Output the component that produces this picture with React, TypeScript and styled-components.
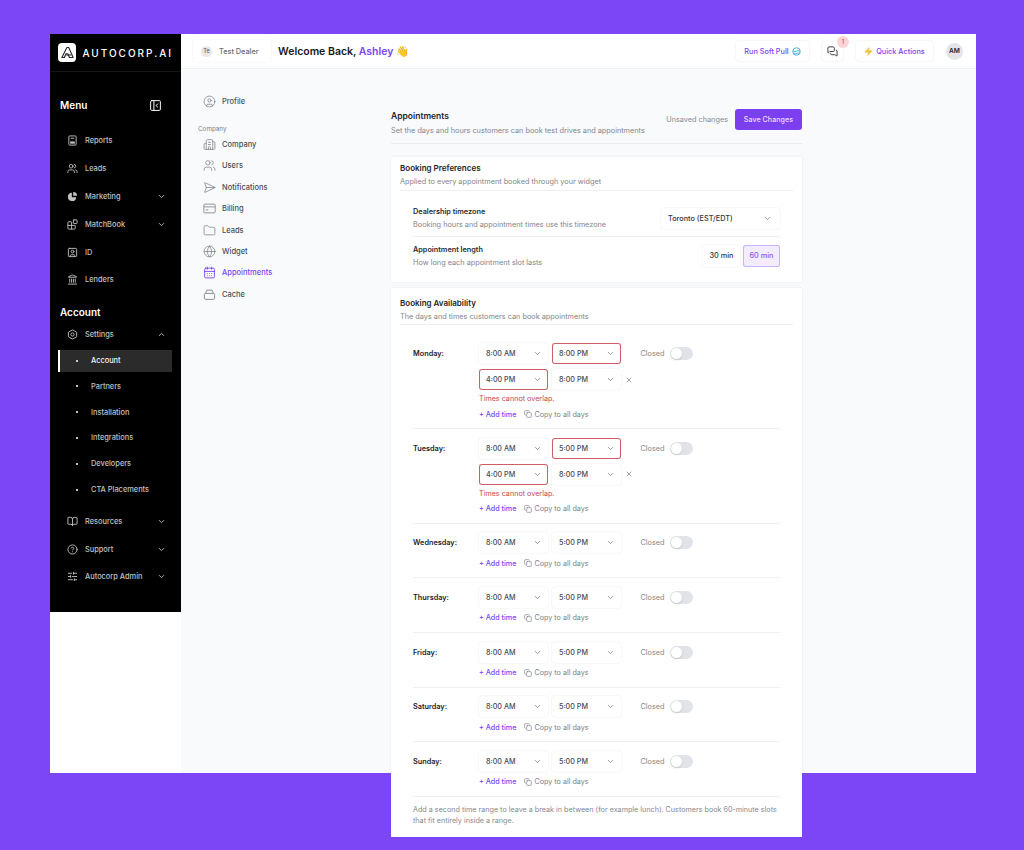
import React from "react";
import styled, { createGlobalStyle } from "styled-components";
import {
  Building2,
  CalendarDays,
  ChevronDown,
  ChevronUp,
  CircleHelp,
  CircleUser,
  Copy,
  BookOpen,
  Folder,
  Globe,
  Landmark,
  MessagesSquare,
  PanelLeftClose,
  SendHorizontal,
  SlidersHorizontal,
  SquareUser,
  Users,
  X,
  Zap,
  Blocks,
} from "lucide-react";

const GlobalStyle = createGlobalStyle`
  html, body {
    margin: 0;
    background: #7c45f6;
    font-family: "Inter", "Liberation Sans", sans-serif;
    color: #1d1f27;
  }
  * {
    box-sizing: border-box;
  }
`;

const Page = styled.div`
  width: 1024px;
  height: 850px;
  padding: 34px 48px 0 50px;
  overflow: hidden;
`;

const AppWindow = styled.div`
  display: flex;
  align-items: flex-start;
  height: 739px;
  background: #fff;
`;

const Sidebar = styled.aside`
  width: 131px;
  height: 578px;
  flex-shrink: 0;
  background: #000;
  color: #d6d6d6;
`;

const LogoRow = styled.div`
  display: flex;
  align-items: center;
  gap: 6px;
  height: 38px;
  padding: 0 8px;
  border-bottom: 1px solid #141414;
`;

const LogoMark = styled.div`
  display: flex;
  align-items: center;
  justify-content: center;
  width: 19px;
  height: 19px;
  border-radius: 4px;
  background: #fff;
`;

const LogoText = styled.div`
  color: #fff;
  font-size: 10px;
  font-weight: 500;
  letter-spacing: 2px;
  white-space: nowrap;
`;

const SectionHead = styled.div<{ $top: number }>`
  display: flex;
  align-items: center;
  justify-content: space-between;
  height: 14px;
  margin-top: ${(p) => p.$top}px;
  padding: 0 19px 0 10px;
  color: #fff;
  font-size: 10px;
  font-weight: 600;
`;

const NavGroup = styled.div<{ $top: number }>`
  display: flex;
  flex-direction: column;
  margin-top: ${(p) => p.$top}px;
  padding-left: 17px;
`;

const NavItem = styled.div`
  display: flex;
  align-items: center;
  height: 27.8px;
  padding-right: 15px;
  font-size: 7.4px;
  font-weight: 500;
  color: #c2c2c2;
`;

const NavLabel = styled.span`
  flex: 1;
  margin-left: 7px;
`;

const SubList = styled.div`
  display: flex;
  flex-direction: column;
  margin: 1px 0 3px;
`;

const SubItem = styled.div<{ $active?: boolean }>`
  display: flex;
  align-items: center;
  gap: 13px;
  height: 22px;
  margin: 0 9px 3.8px 8px;
  padding-left: 16px;
  border-left: 2px solid ${(p) => (p.$active ? "#fff" : "transparent")};
  background: ${(p) => (p.$active ? "#2b2b2b" : "transparent")};
  color: ${(p) => (p.$active ? "#f2f2f2" : "#c2c2c2")};
  font-size: 7.4px;
  font-weight: 500;
`;

const Bullet = styled.span`
  width: 2px;
  height: 2px;
  border-radius: 50%;
  background: #fff;
`;

const Main = styled.div`
  flex: 1;
  min-width: 0;
  height: 739px;
  display: flex;
  flex-direction: column;
`;

const Header = styled.header`
  display: flex;
  flex-shrink: 0;
  align-items: center;
  height: 35px;
  padding: 0 13px 0 12px;
  border-bottom: 1px solid #eff0f4;
  background: #fff;
`;

const DealerChip = styled.div`
  display: flex;
  align-items: center;
  gap: 7px;
  width: 78px;
  height: 22px;
  padding-left: 8px;
  border-radius: 3px;
  box-shadow: 0 0 2px rgba(30, 30, 60, 0.1);
  color: #686c76;
  font-size: 7.3px;
  font-weight: 500;
`;

const DealerBadge = styled.span`
  display: flex;
  align-items: center;
  justify-content: center;
  width: 11px;
  height: 11px;
  border-radius: 50%;
  background: #e7e8ee;
  font-size: 5.5px;
  font-weight: 600;
`;

const Welcome = styled.h1`
  margin: 0 0 0 7px;
  font-size: 10.5px;
  font-weight: 600;
  color: #17181d;
  white-space: nowrap;
`;

const Accent = styled.span`
  color: #7c45f6;
`;

const HeaderSpacer = styled.div`
  flex: 1;
`;

const HeaderButton = styled.div<{ $width: number }>`
  display: flex;
  align-items: center;
  justify-content: center;
  gap: 3px;
  width: ${(p) => p.$width}px;
  height: 20px;
  border-radius: 3px;
  box-shadow: 0 0 1.5px rgba(30, 30, 60, 0.16);
  color: #7c45f6;
  font-size: 7.3px;
  font-weight: 500;
  white-space: nowrap;
`;

const ChatButton = styled(HeaderButton)`
  position: relative;
  margin: 0 13px;
  color: #333;
`;

const CountBadge = styled.span`
  position: absolute;
  top: -5px;
  right: -6px;
  display: flex;
  align-items: center;
  justify-content: center;
  width: 12px;
  height: 12px;
  border-radius: 50%;
  background: #fbd5d5;
  color: #c43c3c;
  font-size: 5.5px;
`;

const Avatar = styled.div`
  display: flex;
  align-items: center;
  justify-content: center;
  width: 17px;
  height: 17px;
  margin-left: 13px;
  border-radius: 50%;
  background: #e4e5e9;
  font-size: 6.6px;
  font-weight: 600;
  color: #26282f;
`;

const Body = styled.div`
  flex: 1;
  min-height: 0;
  display: flex;
  align-items: flex-start;
  padding: 0 0 0 17px;
  background: #f9fafc;
`;

const SettingsNav = styled.nav`
  width: 193px;
  flex-shrink: 0;
  padding-top: 21.5px;
`;

const SettingsItem = styled.div<{ $active?: boolean }>`
  display: flex;
  align-items: center;
  gap: 6px;
  height: 21.4px;
  padding-left: 5px;
  color: ${(p) => (p.$active ? "#7c45f6" : "#4b4e57")};
  font-size: 7.5px;
  font-weight: 500;
  svg {
    color: ${(p) => (p.$active ? "#7c45f6" : "#74777f")};
  }
`;

const SettingsLabel = styled.div`
  margin: 12px 0 -1px;
  height: 11px;
  color: #7b7e88;
  font-size: 6.3px;
  line-height: 11px;
`;

const Content = styled.div`
  width: 411px;
  flex-shrink: 0;
  padding-top: 40px;
`;

const PageHead = styled.div`
  display: flex;
  align-items: flex-start;
  justify-content: space-between;
  height: 35px;
  border-bottom: 1px solid #e9eaee;
`;

const PageTitle = styled.div`
  margin-top: 1px;
  color: #22242b;
  font-size: 8.5px;
  font-weight: 600;
  line-height: 13px;
`;

const Muted = styled.div`
  margin-top: 2px;
  color: #82858e;
  font-size: 7.3px;
  line-height: 11px;
  white-space: nowrap;
`;

const PageActions = styled.div`
  display: flex;
  align-items: center;
  gap: 7px;
  color: #868992;
  font-size: 7.3px;
`;

const SaveButton = styled.button`
  width: 67px;
  height: 21px;
  padding: 0;
  border: none;
  border-radius: 3px;
  background: #7c3ff0;
  color: #e9defd;
  font-family: inherit;
  font-size: 7.2px;
  font-weight: 500;
`;

const Card = styled.section<{ $top: number }>`
  margin-top: ${(p) => p.$top}px;
  background: #fff;
  box-shadow: 0 0 2px rgba(30, 30, 60, 0.08);
`;

const CardHead = styled.div<{ $tall?: boolean }>`
  margin: 0 9px;
  padding-top: ${(p) => (p.$tall ? 9 : 5)}px;
  height: ${(p) => (p.$tall ? 37 : 34)}px;
  border-bottom: 1px solid #eeeff3;
`;

const CardTitle = styled.div`
  color: #1f2128;
  font-size: 8px;
  font-weight: 600;
  line-height: 13px;
`;

const CardDesc = styled(Muted)`
  margin-top: 1px;
`;

const PrefRow = styled.div<{ $last?: boolean }>`
  display: flex;
  align-items: center;
  justify-content: space-between;
  height: ${(p) => (p.$last ? 45 : 46)}px;
  margin: 0 22px;
  padding: ${(p) => (p.$last ? "0 0 8px" : "9px 0 0")};
  border-bottom: ${(p) => (p.$last ? "none" : "1px solid #f0f1f4")};
`;

const PrefLabel = styled.div`
  color: #292b33;
  font-size: 7.3px;
  font-weight: 600;
  line-height: 12px;
`;

const TimezoneSelect = styled.div`
  display: flex;
  align-items: center;
  justify-content: space-between;
  width: 119px;
  height: 21px;
  padding: 0 8px 0 7px;
  border-radius: 3px;
  box-shadow: 0 0 1.5px rgba(30, 30, 60, 0.14);
  color: #333640;
  font-size: 7.3px;
  font-weight: 500;
`;

const Segments = styled.div`
  display: flex;
  gap: 3px;
`;

const Segment = styled.div<{ $active?: boolean }>`
  display: flex;
  align-items: center;
  justify-content: center;
  width: 37px;
  height: 22px;
  border-radius: 3px;
  background: ${(p) => (p.$active ? "#f2ecfe" : "#fff")};
  box-shadow: ${(p) =>
    p.$active ? "inset 0 0 0 1px #c9b3f6" : "0 0 1.5px rgba(30, 30, 60, 0.12)"};
  color: ${(p) => (p.$active ? "#8a5af5" : "#333640")};
  font-size: 7.3px;
  font-weight: 500;
`;

const DayList = styled.div`
  margin: 0 22px;
`;

const DayRow = styled.div<{ $first?: boolean }>`
  display: flex;
  padding: ${(p) => (p.$first ? "18px" : "8.6px")} 0 8.5px;
  border-bottom: 1px solid #f0f1f4;
`;

const DayName = styled.div`
  width: 66px;
  height: 21px;
  flex-shrink: 0;
  color: #22242b;
  font-size: 7.3px;
  font-weight: 600;
  line-height: 21px;
`;

const DayBody = styled.div`
  display: flex;
  flex-direction: column;
`;

const TimeLine = styled.div<{ $second?: boolean }>`
  display: flex;
  align-items: center;
  gap: 4px;
  margin-top: ${(p) => (p.$second ? 5 : 0)}px;
`;

const TimeSelect = styled.div<{ $error?: boolean }>`
  display: flex;
  align-items: center;
  justify-content: space-between;
  width: 69px;
  height: 21px;
  padding: 0 6px 0 7px;
  border-radius: 3px;
  box-shadow: ${(p) =>
    p.$error ? "inset 0 0 0 1px #cc5f66" : "0 0 1.5px rgba(30, 30, 60, 0.14)"};
  color: #474a53;
  font-size: 7.2px;
  font-weight: 500;
  svg {
    color: #777a84;
  }
`;

const ClosedLabel = styled.span`
  margin-left: 15.5px;
  color: #868993;
  font-size: 7.3px;
`;

const Toggle = styled.span`
  position: relative;
  width: 23px;
  height: 13px;
  margin-left: 1px;
  border-radius: 7px;
  background: #e2e3e8;
`;

const ToggleKnob = styled.span`
  position: absolute;
  top: 1px;
  left: 1px;
  width: 11px;
  height: 11px;
  border-radius: 50%;
  background: #fff;
  box-shadow: 0 1px 2px rgba(0, 0, 0, 0.15);
`;

const RemoveButton = styled.span`
  display: flex;
  margin-left: 0;
  color: #6d7079;
`;

const ErrorText = styled.div`
  margin-top: 3.1px;
  color: #c8454f;
  font-size: 7.2px;
  line-height: 11px;
`;

const ActionRow = styled.div`
  display: flex;
  align-items: center;
  gap: 8px;
  height: 11px;
  margin-top: 4.5px;
  font-size: 7.2px;
`;

const AddTime = styled.span`
  color: #7c45f6;
  font-weight: 500;
`;

const CopyAll = styled.span`
  display: flex;
  align-items: center;
  gap: 2px;
  color: #7d808a;
`;

const Note = styled.p`
  margin: 0 20px 0 22px;
  padding: 7px 0 11.5px;
  color: #85888f;
  font-size: 7.2px;
  line-height: 11px;
`;

const LogoGlyph = () => (
  <svg width="15" height="15" viewBox="0 0 24 24" fill="none" stroke="#222" strokeWidth="1.7" strokeLinejoin="round">
    <path d="M3 20 L11 4 H14 L21 20 H15 L12.5 14 H9.5 L7 20 Z" />
    <path d="M10 16 H18" />
  </svg>
);

const CacheIcon = () => (
  <svg width="13" height="13" viewBox="0 0 24 24" fill="none" stroke="currentColor" strokeWidth="1.5" strokeLinejoin="round">
    <path d="M2.5 12 V19 a2 2 0 0 0 2 2 H19.5 a2 2 0 0 0 2 -2 V12 a2 2 0 0 0 -2 -2 H4.5 a2 2 0 0 0 -2 2 Z" />
    <path d="M5 10 L7 4 H17 L19 10" />
  </svg>
);

const BillingIcon = () => (
  <svg width="13" height="13" viewBox="0 0 24 24" fill="none" stroke="currentColor" strokeWidth="1.4">
    <rect x="1.5" y="4" width="21" height="16" rx="1.5" />
    <path d="M1.5 9 H22.5" />
    <path d="M5 14.5 H10" />
  </svg>
);

const ReportsIcon = () => (
  <svg width="11" height="11" viewBox="0 0 24 24" fill="none" stroke="currentColor" strokeWidth="2">
    <rect x="4" y="2" width="16" height="20" rx="2" />
    <rect x="7" y="14" width="10" height="5" fill="currentColor" stroke="none" />
    <path d="M8 7 H16" />
  </svg>
);

const MarketingIcon = () => (
  <svg width="11" height="11" viewBox="0 0 24 24" fill="currentColor">
    <path d="M10.5 4 a9 9 0 1 0 9.5 9.5 H10.5 Z" />
    <path d="M13.5 2 a8.5 8.5 0 0 1 8.5 8.5 H13.5 Z" />
  </svg>
);

const SoftPullIcon = () => (
  <svg width="9" height="9" viewBox="0 0 24 24" fill="none" stroke="#3ba7d8" strokeWidth="2.4">
    <circle cx="12" cy="12" r="10" />
    <path d="M3 10 q5 5 9 1 t9 1" />
    <path d="M5 16 q5 4 8 1 t7 0" />
  </svg>
);

const GearIcon = () => (
  <svg width="11" height="11" viewBox="0 0 24 24" fill="none" stroke="currentColor" strokeWidth="2" strokeLinejoin="round">
    <path d="M12 2 L21 7 V17 L12 22 L3 17 V7 Z" />
    <circle cx="12" cy="12" r="3.5" />
  </svg>
);

const SidebarRow = ({ icon, label, chevron }: { icon: React.ReactNode; label: string; chevron?: "up" | "down" }) => (
  <NavItem>
    {icon}
    <NavLabel>{label}</NavLabel>
    {chevron === "down" && <ChevronDown size={9} color="#ddd" />}
    {chevron === "up" && <ChevronUp size={9} color="#ddd" />}
  </NavItem>
);

const Time = ({ value, error }: { value: string; error?: boolean }) => (
  <TimeSelect $error={error}>
    {value}
    <ChevronDown size={9} />
  </TimeSelect>
);

type Day = {
  name: string;
  from: string;
  to: string;
  toError?: boolean;
  second?: [string, string];
};

const days: Day[] = [
  { name: "Monday", from: "8:00 AM", to: "8:00 PM", toError: true, second: ["4:00 PM", "8:00 PM"] },
  { name: "Tuesday", from: "8:00 AM", to: "5:00 PM", toError: true, second: ["4:00 PM", "8:00 PM"] },
  { name: "Wednesday", from: "8:00 AM", to: "5:00 PM" },
  { name: "Thursday", from: "8:00 AM", to: "5:00 PM" },
  { name: "Friday", from: "8:00 AM", to: "5:00 PM" },
  { name: "Saturday", from: "8:00 AM", to: "5:00 PM" },
  { name: "Sunday", from: "8:00 AM", to: "5:00 PM" },
];

const settingsLinks = [
  { label: "Company", icon: <Building2 size={13} strokeWidth={1.3} /> },
  { label: "Users", icon: <Users size={13} strokeWidth={1.3} /> },
  { label: "Notifications", icon: <SendHorizontal size={13} strokeWidth={1.3} /> },
  { label: "Billing", icon: <BillingIcon /> },
  { label: "Leads", icon: <Folder size={13} strokeWidth={1.3} /> },
  { label: "Widget", icon: <Globe size={13} strokeWidth={1.3} /> },
  { label: "Appointments", icon: <CalendarDays size={13} strokeWidth={1.7} />, active: true },
  { label: "Cache", icon: <CacheIcon /> },
];

const subLinks = ["Account", "Partners", "Installation", "Integrations", "Developers", "CTA Placements"];

export default function App() {
  return (
    <Page>
      <GlobalStyle />
      <AppWindow>
        <Sidebar>
          <LogoRow>
            <LogoMark>
              <LogoGlyph />
            </LogoMark>
            <LogoText>AUTOCORP.AI</LogoText>
          </LogoRow>
          <SectionHead $top={26}>
            Menu
            <PanelLeftClose size={13} strokeWidth={1.8} />
          </SectionHead>
          <NavGroup $top={15}>
            <SidebarRow icon={<ReportsIcon />} label="Reports" />
            <SidebarRow icon={<Users size={11} />} label="Leads" />
            <SidebarRow icon={<MarketingIcon />} label="Marketing" chevron="down" />
            <SidebarRow icon={<Blocks size={11} />} label="MatchBook" chevron="down" />
            <SidebarRow icon={<SquareUser size={11} />} label="ID" />
            <SidebarRow icon={<Landmark size={11} />} label="Lenders" />
          </NavGroup>
          <SectionHead $top={11}>Account</SectionHead>
          <NavGroup $top={2}>
            <SidebarRow icon={<GearIcon />} label="Settings" chevron="up" />
          </NavGroup>
          <SubList>
            {subLinks.map((link, i) => (
              <SubItem key={link} $active={i === 0}>
                <Bullet />
                {link}
              </SubItem>
            ))}
          </SubList>
          <NavGroup $top={0}>
            <SidebarRow icon={<BookOpen size={11} />} label="Resources" chevron="down" />
            <SidebarRow icon={<CircleHelp size={11} />} label="Support" chevron="down" />
            <SidebarRow icon={<SlidersHorizontal size={11} />} label="Autocorp Admin" chevron="down" />
          </NavGroup>
        </Sidebar>

        <Main>
          <Header>
            <DealerChip>
              <DealerBadge>Te</DealerBadge>
              Test Dealer
            </DealerChip>
            <Welcome>
              Welcome Back, <Accent>Ashley</Accent> 👋
            </Welcome>
            <HeaderSpacer />
            <HeaderButton $width={73}>
              Run Soft Pull <SoftPullIcon />
            </HeaderButton>
            <ChatButton $width={21}>
              <MessagesSquare size={11} />
              <CountBadge>1</CountBadge>
            </ChatButton>
            <HeaderButton $width={77}>
              <Zap size={9} color="#eec23e" fill="#eec23e" /> Quick Actions
            </HeaderButton>
            <Avatar>AM</Avatar>
          </Header>

          <Body>
            <SettingsNav>
              <SettingsItem>
                <CircleUser size={13} strokeWidth={1.3} />
                Profile
              </SettingsItem>
              <SettingsLabel>Company</SettingsLabel>
              {settingsLinks.map((link) => (
                <SettingsItem key={link.label} $active={link.active}>
                  {link.icon}
                  {link.label}
                </SettingsItem>
              ))}
            </SettingsNav>

            <Content>
              <PageHead>
                <div>
                  <PageTitle>Appointments</PageTitle>
                  <Muted>Set the days and hours customers can book test drives and appointments</Muted>
                </div>
                <PageActions>
                  Unsaved changes
                  <SaveButton>Save Changes</SaveButton>
                </PageActions>
              </PageHead>

              <Card $top={13}>
                <CardHead>
                  <CardTitle>Booking Preferences</CardTitle>
                  <CardDesc>Applied to every appointment booked through your widget</CardDesc>
                </CardHead>
                <PrefRow>
                  <div>
                    <PrefLabel>Dealership timezone</PrefLabel>
                    <CardDesc>Booking hours and appointment times use this timezone</CardDesc>
                  </div>
                  <TimezoneSelect>
                    Toronto (EST/EDT)
                    <ChevronDown size={9} color="#777a84" />
                  </TimezoneSelect>
                </PrefRow>
                <PrefRow $last>
                  <div>
                    <PrefLabel>Appointment length</PrefLabel>
                    <CardDesc>How long each appointment slot lasts</CardDesc>
                  </div>
                  <Segments>
                    <Segment>30 min</Segment>
                    <Segment $active>60 min</Segment>
                  </Segments>
                </PrefRow>
              </Card>

              <Card $top={6}>
                <CardHead $tall>
                  <CardTitle>Booking Availability</CardTitle>
                  <CardDesc>The days and times customers can book appointments</CardDesc>
                </CardHead>
                <DayList>
                  {days.map((day, i) => (
                    <DayRow key={day.name} $first={i === 0}>
                      <DayName>{day.name}:</DayName>
                      <DayBody>
                        <TimeLine>
                          <Time value={day.from} />
                          <Time value={day.to} error={day.toError} />
                          <ClosedLabel>Closed</ClosedLabel>
                          <Toggle>
                            <ToggleKnob />
                          </Toggle>
                        </TimeLine>
                        {day.second && (
                          <>
                            <TimeLine $second>
                              <Time value={day.second[0]} error />
                              <Time value={day.second[1]} />
                              <RemoveButton>
                                <X size={8} />
                              </RemoveButton>
                            </TimeLine>
                            <ErrorText>Times cannot overlap.</ErrorText>
                          </>
                        )}
                        <ActionRow>
                          <AddTime>+ Add time</AddTime>
                          <CopyAll>
                            <Copy size={8} />
                            Copy to all days
                          </CopyAll>
                        </ActionRow>
                      </DayBody>
                    </DayRow>
                  ))}
                </DayList>
                <Note>
                  Add a second time range to leave a break in between (for example lunch). Customers book 60-minute
                  slots that fit entirely inside a range.
                </Note>
              </Card>
            </Content>
          </Body>
        </Main>
      </AppWindow>
    </Page>
  );
}
